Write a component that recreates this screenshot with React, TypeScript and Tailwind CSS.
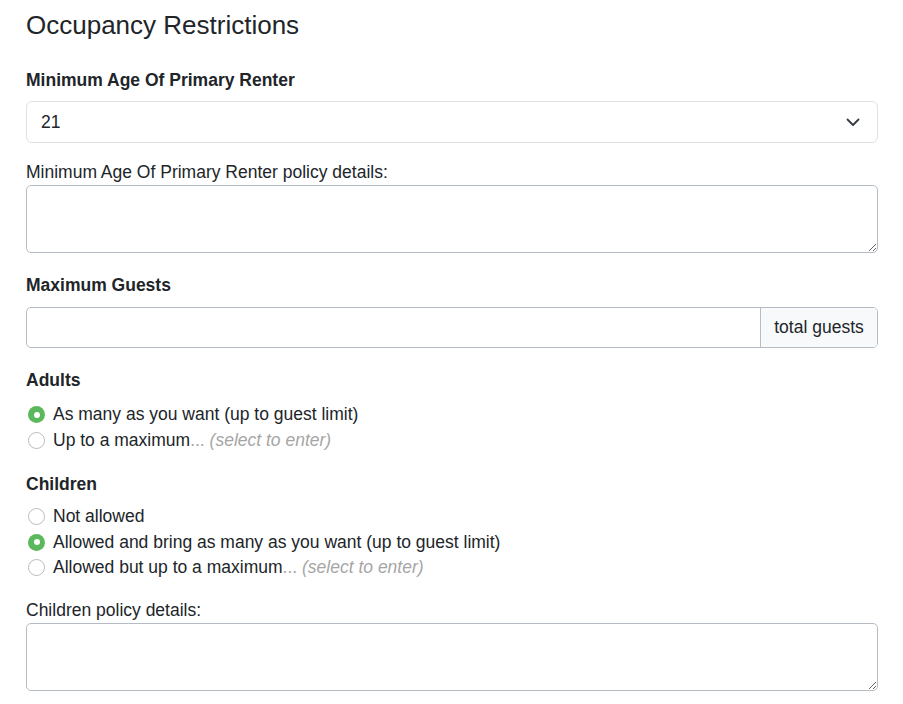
import React from 'react';

const font = { fontFamily: '"Liberation Sans", Arial, sans-serif' };

function Radio({ checked, children }: { checked?: boolean; children: React.ReactNode }) {
  return (
    <label className="flex items-center leading-[25.5px] text-[17.5px] text-[#212529]">
      {checked ? (
        <span className="ml-[2px] h-[17px] w-[17px] shrink-0 rounded-full bg-[#5cb85c] flex items-center justify-center">
          <span className="h-[6px] w-[6px] rounded-full bg-white" />
        </span>
      ) : (
        <span className="ml-[2px] h-[17px] w-[17px] shrink-0 rounded-full border border-[#b8bcc0] bg-white" />
      )}
      <span className="ml-[8px]">{children}</span>
    </label>
  );
}

export default function App() {
  return (
    <div className="bg-white min-h-screen pl-[26px] pr-[25px] pt-[11px] text-[#212529]" style={font}>
      {/* Heading */}
      <h2 className="text-[26px] leading-[29px] font-normal">Occupancy Restrictions</h2>

      {/* Minimum age */}
      <div className="mt-[28px] text-[17.5px] leading-[24px] font-bold">Minimum Age Of Primary Renter</div>
      <div className="mt-[9px] h-[42px] rounded-[6px] border border-[#dee2e6] flex items-center justify-between pl-[14px] pr-[17px] text-[17.5px]">
        <span>21</span>
        <svg width="14" height="9" viewBox="0 0 14 9" fill="none">
          <path d="M1.5 1.5L7 7L12.5 1.5" stroke="#343a40" strokeWidth="1.8" strokeLinecap="round" strokeLinejoin="round" />
        </svg>
      </div>

      <div className="mt-[17px] text-[17.5px] leading-[24px]">Minimum Age Of Primary Renter policy details:</div>
      <textarea className="mt-[1px] block w-full h-[68px] rounded-[5px] border border-[#b5bcc3] outline-none" />

      {/* Maximum guests */}
      <div className="mt-[20px] text-[17.5px] leading-[24px] font-bold">Maximum Guests</div>
      <div className="mt-[10px] flex h-[41px] rounded-[5px] border border-[#b5bcc3] overflow-hidden">
        <input className="flex-1 outline-none px-3" />
        <div className="w-[117px] border-l border-[#b5bcc3] bg-[#f8f9fa] flex items-center justify-center text-[17.5px]">
          total guests
        </div>
      </div>

      {/* Adults */}
      <div className="mt-[20px] text-[17.5px] leading-[24px] font-bold">Adults</div>
      <div className="mt-[10px]">
        <Radio checked>As many as you want (up to guest limit)</Radio>
        <Radio>
          Up to a maximum<span className="text-[#a6a6a6]">... </span>
          <em className="text-[#a6a6a6]">(select to enter)</em>
        </Radio>
      </div>

      {/* Children */}
      <div className="mt-[19px] text-[17.5px] leading-[24px] font-bold">Children</div>
      <div className="mt-[8px]">
        <Radio>Not allowed</Radio>
        <Radio checked>Allowed and bring as many as you want (up to guest limit)</Radio>
        <Radio>
          Allowed but up to a maximum<span className="text-[#a6a6a6]">... </span>
          <em className="text-[#a6a6a6]">(select to enter)</em>
        </Radio>
      </div>

      <div className="mt-[17px] text-[17.5px] leading-[24px]">Children policy details:</div>
      <textarea className="mt-[1px] block w-full h-[68px] rounded-[5px] border border-[#b5bcc3] outline-none" />
    </div>
  );
}
